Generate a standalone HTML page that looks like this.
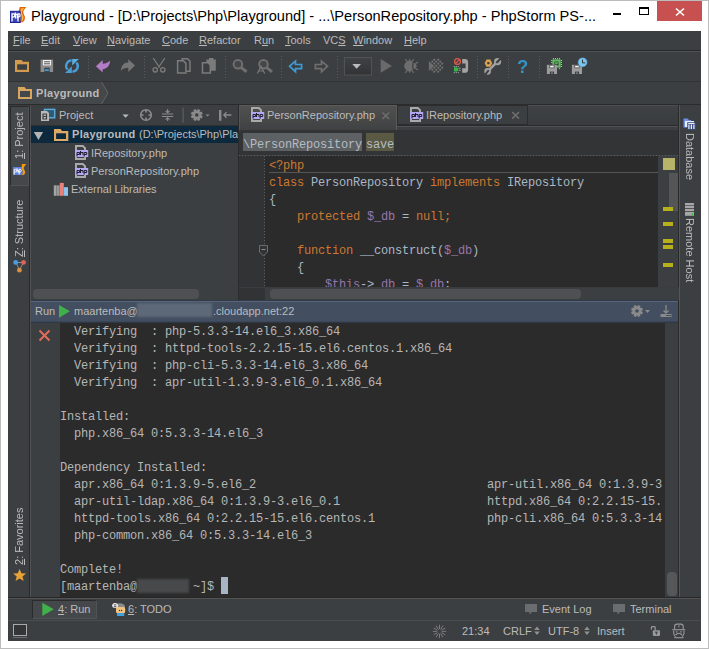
<!DOCTYPE html>
<html><head><meta charset="utf-8">
<style>
*{box-sizing:border-box;margin:0;padding:0}
html,body{width:709px;height:649px;overflow:hidden;background:#fff;font-family:"Liberation Sans",sans-serif}
.a{position:absolute}
.t{position:absolute;white-space:pre;line-height:1}
.m{position:absolute;white-space:pre;line-height:1;font-size:11px;color:#bbbbbb;top:35px}
.m u{text-decoration:underline;text-underline-offset:1px}
.ui{position:absolute;white-space:pre;line-height:1;font-size:11px;color:#bbbbbb}
.mono{font-family:"Liberation Mono",monospace;font-size:12px;letter-spacing:-0.2px;white-space:pre;line-height:17px;position:absolute}
.sep{position:absolute;top:56px;width:1px;height:22px;background:repeating-linear-gradient(#5a5d5f 0 1px,transparent 1px 3px)}
</style></head><body>
<!-- window frame -->
<div class="a" style="left:0;top:0;width:709px;height:649px;border:1px solid #bcbcbc"></div>

<!-- title bar -->
<div class="t" style="left:31px;top:9px;font-size:14.6px;color:#000">Playground - [D:\Projects\Php\Playground] - ...\PersonRepository.php - PhpStorm PS-...</div>
<div class="a" style="left:613px;top:13px;width:8px;height:2px;background:#000"></div>
<div class="a" style="left:639px;top:7px;width:10px;height:8px;border:1px solid #000;border-top-width:2px"></div>
<div class="a" style="left:657px;top:1px;width:45px;height:20px;background:#c75050"></div>
<svg class="a" style="left:657px;top:1px" width="45" height="20"><path d="M19 7.5L27 14.5M27 7.5L19 14.5" stroke="#fff" stroke-width="1.6"/></svg>

<!-- IDE background -->
<div class="a" style="left:8px;top:31px;width:693px;height:610px;background:#3c3f41"></div>

<!-- menu bar -->
<div class="m" style="left:13px"><u>F</u>ile</div>
<div class="m" style="left:41px"><u>E</u>dit</div>
<div class="m" style="left:73px"><u>V</u>iew</div>
<div class="m" style="left:107px"><u>N</u>avigate</div>
<div class="m" style="left:162px"><u>C</u>ode</div>
<div class="m" style="left:199px"><u>R</u>efactor</div>
<div class="m" style="left:254px">R<u>u</u>n</div>
<div class="m" style="left:285px"><u>T</u>ools</div>
<div class="m" style="left:323px">VC<u>S</u></div>
<div class="m" style="left:353px"><u>W</u>indow</div>
<div class="m" style="left:404px"><u>H</u>elp</div>
<div class="a" style="left:8px;top:50px;width:693px;height:1px;background:#262829"></div>
<div class="a" style="left:8px;top:51px;width:693px;height:1px;background:#515456"></div>

<!-- toolbar -->
<div class="sep" style="left:88px"></div>
<div class="sep" style="left:144px"></div>
<div class="sep" style="left:225px"></div>
<div class="sep" style="left:281px"></div>
<div class="sep" style="left:337px"></div>
<div class="sep" style="left:477px"></div>
<div class="sep" style="left:508px"></div>
<div class="sep" style="left:539px"></div>
<div class="a" style="left:8px;top:81px;width:693px;height:1px;background:#313335"></div>

<!-- nav bar -->
<svg class="a" style="left:8px;top:82px" width="110" height="22"><path d="M0 0H93.5L100 11L93.5 22H0Z" fill="#45484a"/><path d="M93.5 0L100 11L93.5 22" stroke="#626568" fill="none"/></svg>
<div class="t" style="left:36px;top:88px;font-size:11px;font-weight:bold;color:#bbbbbb;letter-spacing:0.3px">Playground</div>
<div class="a" style="left:8px;top:104px;width:693px;height:1px;background:#2b2b2b"></div>

<!-- left stripe -->
<div class="a" style="left:10px;top:106px;width:19px;height:80px;background:#45484a;border-left:1px solid #2b2b2b;border-top:1px solid #2b2b2b;border-right:1px solid #505355;border-bottom:1px solid #505355"></div>
<div class="ui" style="left:14px;top:159px;transform-origin:0 0;transform:rotate(-90deg);will-change:transform"><u style="text-underline-offset:1px">1</u>: Project</div>
<div class="ui" style="left:14px;top:257px;transform-origin:0 0;transform:rotate(-90deg);will-change:transform"><u style="text-underline-offset:1px">Z</u>: Structure</div>
<div class="ui" style="left:14px;top:565px;transform-origin:0 0;transform:rotate(-90deg);will-change:transform"><u style="text-underline-offset:1px">2</u>: Favorites</div>
<div class="ui" style="left:695px;top:133px;transform-origin:0 0;transform:rotate(90deg);will-change:transform">Database</div>
<div class="ui" style="left:695px;top:218px;transform-origin:0 0;transform:rotate(90deg);will-change:transform">Remote Host</div>
<div class="a" style="left:29px;top:105px;width:1px;height:492px;background:#2a2a2a"></div><div class="a" style="left:30px;top:105px;width:1px;height:492px;background:#535353"></div>

<!-- project panel -->
<div class="a" style="left:31px;top:125px;width:207px;height:1px;background:#2e3032"></div><div class="a" style="left:31px;top:126px;width:207px;height:17px;background:#0d293e"></div>
<div class="ui" style="left:59px;top:110px;font-size:11px">Project</div>
<div class="t" style="left:72px;top:129px;font-size:11px;font-weight:bold;color:#bbbbbb;letter-spacing:0.3px">Playground</div>
<div class="a" style="left:31px;top:126px;width:207px;height:17px;overflow:hidden"><div class="t" style="left:108px;top:3px;font-size:11px;color:#bbbbbb">(D:\Projects\Php\Playground)</div></div>
<div class="ui" style="left:91px;top:148px">IRepository.php</div>
<div class="ui" style="left:91px;top:166px">PersonRepository.php</div>
<div class="ui" style="left:71px;top:184px">External Libraries</div>
<div class="a" style="left:33px;top:289px;width:166px;height:10px;border-radius:4px;background:#4e5052"></div>

<!-- editor -->
<div class="a" style="left:238px;top:105px;width:1px;height:195px;background:#2b2b2b"></div>
<div class="a" style="left:239px;top:105px;width:439px;height:20px;background:linear-gradient(#3f4244,#393c3e);border-top:1px solid #4c4f51"></div>
<div class="a" style="left:239px;top:125px;width:439px;height:1px;background:#2b2b2b"></div>
<div class="a" style="left:239px;top:126px;width:439px;height:1px;background:#4f5254"></div>
<div class="a" style="left:239px;top:127px;width:439px;height:3px;background:#3c3f41"></div>
<div class="a" style="left:397px;top:105px;width:131px;height:20px;background:#3c3f41;border:1px solid #2b2d2f;border-top-color:#2b2d2f"></div>
<div class="a" style="left:239px;top:105px;width:158px;height:25px;background:linear-gradient(#505050,#404142);border-top:1px solid #5c5c5c;border-left:1px solid #555555;border-right:1px solid #5a5a5a"></div>
<div class="a" style="left:239px;top:130px;width:439px;height:25px;background:#323436"></div>
<div class="a" style="left:239px;top:156px;width:26px;height:131px;background:#313335"></div>
<div class="a" style="left:265px;top:156px;width:393px;height:131px;background:#2b2b2b"></div>

<!-- right stripe -->
<div class="a" style="left:678px;top:105px;width:1px;height:492px;background:#2a2a2a"></div><div class="a" style="left:679px;top:105px;width:1px;height:492px;background:#555555"></div>

<!-- run panel -->
<div class="a" style="left:31px;top:300px;width:647px;height:1px;background:#2f3a4a"></div>
<div class="a" style="left:31px;top:301px;width:647px;height:1px;background:#5a6678"></div>
<div class="a" style="left:31px;top:302px;width:647px;height:19px;background:#434f60"></div>
<div class="a" style="left:31px;top:321px;width:647px;height:1px;background:#3b4758"></div>
<div class="a" style="left:31px;top:322px;width:647px;height:1px;background:#2f3845"></div>
<div class="a" style="left:60px;top:323px;width:605px;height:274px;background:#2b2b2b"></div>
<div class="a" style="left:8px;top:597px;width:693px;height:1px;background:#272727"></div><div class="a" style="left:8px;top:598px;width:693px;height:1px;background:#535353"></div>
<div class="a" style="left:8px;top:620px;width:693px;height:1px;background:#4a4d4f"></div>



<!-- EDITOR CONTENT -->
<div class="ui" style="left:267px;top:110px">PersonRepository.php</div>
<div class="ui" style="left:426px;top:110px">IRepository.php</div>
<div class="a" style="left:243px;top:133px;width:119px;height:18px;background:#5e6164"></div>
<div class="a" style="left:366px;top:133px;width:28px;height:18px;background:#5a5943"></div>
<div class="mono" style="left:243px;top:136px;line-height:18px;color:#b4bcc4">\PersonRepository</div><div class="mono" style="left:366px;top:136px;line-height:18px;color:#b4bcc4">save</div>
<div class="a" style="left:239px;top:155px;width:439px;height:1px;background:repeating-linear-gradient(90deg,#5a5c5e 0 1px,transparent 1px 3px)"></div>
<div class="a" style="left:264px;top:156px;width:1px;height:131px;background:repeating-linear-gradient(#5a5c5e 0 1px,transparent 1px 3px)"></div>
<div class="a" style="left:269px;top:172px;width:389px;height:1px;background:#555555"></div>
<div class="mono" style="left:269px;top:158px;color:#a9b7c6"><span style="color:#cc7832">&lt;?php</span>
<span style="color:#cc7832">class</span> PersonRepository <span style="color:#cc7832">implements</span> IRepository
{
    <span style="color:#cc7832">protected</span> <span style="color:#9876aa">$_db</span> = <span style="color:#cc7832">null;</span>

    <span style="color:#cc7832">function</span> __construct(<span style="color:#9876aa">$_db</span>)
    {
        <span style="color:#9876aa">$this</span>-&gt;<span style="color:#9876aa">_db</span> = <span style="color:#9876aa">$_db</span>;</div>
<!-- bottom of editor -->
<div class="a" style="left:239px;top:287px;width:440px;height:13px;background:#3c3f41"></div>
<div class="a" style="left:239px;top:287px;width:26px;height:13px;background:#313335"></div>
<div class="a" style="left:239px;top:287px;width:439px;height:1px;background:#3a3d3f"></div>
<div class="a" style="left:270px;top:289px;width:311px;height:10px;border-radius:4px;background:#4e5052"></div>
<!-- error stripe -->
<div class="a" style="left:658px;top:156px;width:20px;height:131px;background:#3c3f41"></div>
<div class="a" style="left:663px;top:158px;width:12px;height:12px;background:#b7b46a"></div>
<div class="a" style="left:669px;top:173px;width:9px;height:38px;background:#535557"></div>
<div class="a" style="left:663px;top:207px;width:10px;height:4px;background:#b8b019"></div>
<div class="a" style="left:663px;top:222px;width:10px;height:4px;background:#b8b019"></div>
<div class="a" style="left:663px;top:239px;width:10px;height:4px;background:#b8b019"></div>
<div class="a" style="left:663px;top:245px;width:10px;height:4px;background:#b8b019"></div>
<div class="a" style="left:663px;top:263px;width:10px;height:4px;background:#b8b019"></div>
<!-- fold marker -->
<svg class="a" style="left:258px;top:245px" width="11" height="12"><path d="M1.5 0.5H9.5V7L5.5 11L1.5 7Z" fill="#313335" stroke="#6b6d6f"/><path d="M3.5 4.5H7.5" stroke="#8a8a8a"/></svg>

<!-- RUN PANEL CONTENT -->
<div class="ui" style="left:35px;top:306px">Run</div>
<svg class="a" style="left:58px;top:304px" width="14" height="15"><path d="M1 1L12 7.3L1 13.7Z" fill="#3fb04a"/></svg>
<div class="ui" style="left:74px;top:306px">maartenba@</div>
<div class="a" style="left:137px;top:303px;width:75px;height:14px;background:#5d6878;filter:blur(0.8px)"></div>
<div class="ui" style="left:213px;top:306px">.cloudapp.net:22</div>
<svg class="a" style="left:38px;top:329px" width="14" height="14"><path d="M1.5 1.5L11.5 11.5M11.5 1.5L1.5 11.5" stroke="#e06c5a" stroke-width="2"/></svg>
<div class="a" style="left:665px;top:323px;width:13px;height:274px;background:#3c3f41"></div>
<div class="a" style="left:667px;top:572px;width:10px;height:24px;border-radius:4px;background:#555759"></div>
<div class="mono" style="left:60px;top:324px;color:#b6b6b6">  Verifying  : php-5.3.3-14.el6_3.x86_64
  Verifying  : httpd-tools-2.2.15-15.el6.centos.1.x86_64
  Verifying  : php-cli-5.3.3-14.el6_3.x86_64
  Verifying  : apr-util-1.3.9-3.el6_0.1.x86_64

Installed:
  php.x86_64 0:5.3.3-14.el6_3

Dependency Installed:
  apr.x86_64 0:1.3.9-5.el6_2                                 apr-util.x86_64 0:1.3.9-3
  apr-util-ldap.x86_64 0:1.3.9-3.el6_0.1                     httpd.x86_64 0:2.2.15-15.
  httpd-tools.x86_64 0:2.2.15-15.el6.centos.1                php-cli.x86_64 0:5.3.3-14
  php-common.x86_64 0:5.3.3-14.el6_3

Complete!
[maartenba@        ~]$ </div>
<div class="a" style="left:137px;top:579px;width:52px;height:14px;background:#47494b;filter:blur(0.8px)"></div>
<div class="a" style="left:221px;top:577px;width:7px;height:17px;background:#a7b4c4"></div>
<!-- run header right icons -->
<svg class="a" style="left:628px;top:303px" width="46" height="16">
<path d="M13.39 8.30 L15.01 9.02 L13.97 11.53 L12.31 10.89 L11.89 11.31 L12.53 12.97 L10.02 14.01 L9.30 12.39 L8.70 12.39 L7.98 14.01 L5.47 12.97 L6.11 11.31 L5.69 10.89 L4.03 11.53 L2.99 9.02 L4.61 8.30 L4.61 7.70 L2.99 6.98 L4.03 4.47 L5.69 5.11 L6.11 4.69 L5.47 3.03 L7.98 1.99 L8.70 3.61 L9.30 3.61 L10.02 1.99 L12.53 3.03 L11.89 4.69 L12.31 5.11 L13.97 4.47 L15.01 6.98 L13.39 7.70ZM10.80 8.00A1.8 1.8 0 1 0 7.20 8.00A1.8 1.8 0 1 0 10.80 8.00Z" fill="#8a8a8a" fill-rule="evenodd"/>
<path d="M17 7H22L19.5 10Z" fill="#8a8a8a"/>
<path d="M38 2V10M35.5 7.5L38 10L40.5 7.5" fill="none" stroke="#8a8a8a" stroke-width="1.3"/>
<rect x="32.5" y="11" width="11" height="3" fill="#8a8a8a"/>
<rect x="38" y="12" width="5" height="1" fill="#434f60"/>
</svg>

<!-- BOTTOM BAR -->
<div class="a" style="left:32px;top:600px;width:65px;height:19px;background:#45484a;border-left:1px solid #2b2b2b;border-top:1px solid #2b2b2b;border-right:1px solid #505355;border-bottom:1px solid #505355"></div>
<svg class="a" style="left:41px;top:602px" width="14" height="15"><path d="M1.3 0.7L12.8 7.3L1.3 14Z" fill="#3fb04a"/></svg>
<div class="ui" style="left:58px;top:604px"><span style="text-decoration:underline">4</span>: Run</div>
<div class="ui" style="left:128px;top:604px"><span style="text-decoration:underline">6</span>: TODO</div>
<svg class="a" style="left:108px;top:598px" width="20" height="20">
<path d="M8 7.5C8 4.5 16.5 4.5 17 8.5V12H8Z" fill="#8c8c8c"/>
<rect x="8" y="9" width="9.2" height="6.4" rx="2" fill="#f0c47e"/>
<circle cx="11.5" cy="12.5" r="0.7" fill="#333"/><circle cx="13.6" cy="12.5" r="0.7" fill="#333"/>
<rect x="9" y="15" width="7.2" height="3" fill="#3fa2e0"/>
<ellipse cx="7.1" cy="7.6" rx="2.9" ry="2.5" fill="#f4f4f4"/>
<path d="M5.8 6.9H8.4M5.8 8.7H8.4" stroke="#333" stroke-width="0.9"/>
</svg>
<svg class="a" style="left:524px;top:603px" width="150" height="13">
<path d="M1 1H13V9H8L5.5 11.5V9H1Z" fill="#6a6d70"/>
<path d="M89 1H101V9H96L93.5 11.5V9H89Z" fill="#6a6d70"/>
</svg>
<div class="ui" style="left:542px;top:604px">Event Log</div>
<div class="ui" style="left:630px;top:604px">Terminal</div>

<!-- STATUS BAR -->
<div class="a" style="left:13px;top:624px;width:14px;height:12px;border:1.3px solid #a9a9a9;background:#333537"></div>
<div class="a" style="left:13px;top:637px;width:14px;height:1px;background:#6a6a6a"></div>
<svg class="a" style="left:0;top:0;overflow:visible" width="1" height="1"><path d="M442.20 631.40L445.80 631.40M441.84 632.75L444.96 634.55M440.85 633.74L442.65 636.86M439.50 634.10L439.50 637.70M438.15 633.74L436.35 636.86M437.16 632.75L434.04 634.55M436.80 631.40L433.20 631.40M437.16 630.05L434.04 628.25M438.15 629.06L436.35 625.94M439.50 628.70L439.50 625.10M440.85 629.06L442.65 625.94M441.84 630.05L444.96 628.25" stroke="#7c7c7c" stroke-width="1" stroke-linecap="round"/></svg>
<div class="ui" style="left:462px;top:626px">21:34</div>
<div class="ui" style="left:503px;top:626px">CRLF</div>
<div class="ui" style="left:548px;top:626px">UTF-8</div>
<div class="ui" style="left:597px;top:626px">Insert</div>
<svg class="a" style="left:530px;top:625px" width="60" height="12">
<path d="M4.2 5L7 1.6L9.8 5ZM4.2 6.6L7 10L9.8 6.6Z" fill="#909090"/>
<path d="M54.2 5L57 1.6L59.8 5ZM54.2 6.6L57 10L59.8 6.6Z" fill="#909090"/>
</svg>
<svg class="a" style="left:0;top:0;overflow:visible" width="1" height="1">
<path d="M651.4 629.6V627.6Q651.4 626.7 652.3 626.7H654.3Q655.2 626.7 655.2 627.6V630.6" fill="none" stroke="#999" stroke-width="1.2"/>
<rect x="652.8" y="630.3" width="7.2" height="5.6" rx="1" fill="#999"/>
<path d="M655 632.2H657.8M656.4 632.2V634.6" stroke="#3c3f41" stroke-width="1"/>
<g fill="none" stroke="#999" stroke-width="1.1">
<path d="M674.6 629.4V626.4Q674.6 624.1 677 624.1H680.8Q683.2 624.1 683.2 626.4V629.4"/>
<path d="M672.3 629.7H685.3"/>
<path d="M673.7 630.6Q673.4 635 675.6 636.6M684 630.6Q684.3 635 682.1 636.6"/>
<path d="M675.6 635Q678.8 631.6 682.1 635"/>
<path d="M674.3 637.7H683.5"/>
<path d="M675.9 631.9H677.4M680.2 631.9H681.7"/>
<path d="M678.9 625.4V627.2"/>
</g>
</svg>

<!-- ICON OVERLAY -->
<svg class="a" style="left:0;top:0" width="709" height="649">

<!-- title icon -->
<path d="M19.8 7H26.2L23.8 10.2Q22.3 12.2 23.8 14.2Q25.8 17 24.6 20Q23.6 22.6 19 22.9Q20.8 20.3 20.8 18.2Q20.8 15.8 19.4 13.6Q18.2 10.8 19.8 7Z" fill="#e0600a"/>
<path d="M21 8.3H24.3L22.6 10.4Q21.2 12.2 22.6 14.5Q24.2 17 23.3 19.6Q22.6 21.3 21 21.8Q22 20 22 18Q22 15.5 20.7 13.5Q19.9 11 21 8.3Z" fill="#ffb43a"/>
<rect x="10.5" y="11.3" width="9.6" height="11.2" fill="#3a46b8" stroke="#1c2596" stroke-width="1"/>
<path d="M12 21.5V13.8H13.8Q14.8 13.8 14.8 15.3Q14.8 16.8 13.8 16.8H12.6M15.4 12.4V18.6M15.4 14.3H16.8Q17.3 14.3 17.3 15V18.6M18 21.5V13.8H19.3Q20 13.8 20 15.3Q20 16.8 19.3 16.8H18.6" fill="none" stroke="#fff" stroke-width="1.3"/>
<!-- toolbar: open -->
<path d="M15 60H21.5L23 61.8H29V72H15Z" fill="#d19a4c"/>
<rect x="17.2" y="64.3" width="9.8" height="5.5" fill="#3c3f41"/>
<!-- save -->
<path d="M40.6 59.6H53.1V72H40.6Z" fill="#8c8c8c"/>
<rect x="43" y="60" width="8" height="5.4" fill="#f0f0f0"/>
<rect x="44" y="61.3" width="6" height="1" fill="#555"/>
<rect x="44" y="63.3" width="6" height="1" fill="#555"/>
<rect x="44.3" y="67.7" width="5.3" height="4.3" fill="#3c3f41"/>
<rect x="44.8" y="69.2" width="4" height="1.9" fill="#3d9ad6"/>
<!-- sync -->
<path d="M71.6 60.4A5.5 5.5 0 0 0 67.6 69.6" fill="none" stroke="#4a9ed8" stroke-width="2.3"/>
<path d="M65.1 72.9H71.8V66.2Z" fill="#4a9ed8"/>
<path d="M72.4 71.6A5.5 5.5 0 0 0 76.4 62.4" fill="none" stroke="#4a9ed8" stroke-width="2.3"/>
<path d="M78.8 59.1H72.2V65.6Z" fill="#5aaee2"/>
<!-- undo -->
<path d="M95.9 66.3L102.7 59.9V63.8C106 63.8 108.5 62.5 109.8 60.6C110.5 65 107 69 102.7 69.3V72.6Z" fill="#b27cc6"/>
<!-- redo -->
<path d="M135 65.4L128.3 59.2V62.6C124 62.6 121 66 120.9 70.9C122.5 68.5 125 67.8 128.3 67.8V71.9Z" fill="#757575"/>
<!-- cut -->
<g stroke="#7b7b7b" fill="none" stroke-width="1.3">
<path d="M153.2 58L159.5 67.5M164.8 58L158.5 67.5"/>
<circle cx="155.2" cy="69.8" r="2.2"/><circle cx="162.8" cy="69.8" r="2.2"/>
</g>
<!-- copy -->
<g stroke="#7b7b7b" fill="#3c3f41" stroke-width="1.5">
<path d="M182.2 58.8H187.5L190 61.3V71.2H182.2Z"/>
<path d="M177.6 60.8H183.3L185.9 63.4V73.1H177.6Z"/>
</g>
<!-- paste -->
<path d="M206.4 59.5H215.8V70.8H206.4Z" fill="#7b7b7b"/>
<rect x="209" y="58" width="4.5" height="2" fill="#7b7b7b"/>
<path d="M202.5 62.8H208L210.3 65V73.1H202.5Z" fill="#3c3f41" stroke="#7b7b7b" stroke-width="1.5"/>
<!-- find -->
<g>
<circle cx="237.9" cy="64.2" r="4.3" fill="#444648" stroke="#6f6f6f" stroke-width="2"/>
<path d="M241.2 67.6L246.6 71.8" stroke="#6f6f6f" stroke-width="3"/>
<circle cx="263.5" cy="64.2" r="4.3" fill="#444648" stroke="#6f6f6f" stroke-width="2"/>
<path d="M266.8 67.6L272 71.8" stroke="#6f6f6f" stroke-width="3"/>
<path d="M257.3 73.4L261 66.3L264.7 73.4M258.7 71H263.3" stroke="#7a7a7a" stroke-width="1.1" fill="none"/>
</g>
<!-- back / forward -->
<path d="M289.6 66.2L295.5 61.2V64.5H301.6V68.6H295.5V71.8Z" fill="none" stroke="#3d9bd5" stroke-width="1.7" stroke-linejoin="miter"/>
<path d="M327.4 66.2L321.5 61.2V64.5H315.4V68.6H321.5V71.8Z" fill="none" stroke="#6f6f6f" stroke-width="1.7"/>
<!-- run config dropdown -->
<defs><linearGradient id="dd" x1="0" y1="0" x2="0" y2="1"><stop offset="0" stop-color="#3f4244"/><stop offset="1" stop-color="#313335"/></linearGradient></defs><rect x="344.5" y="57.5" width="27" height="17.5" fill="url(#dd)" stroke="#505355" stroke-width="1"/>
<path d="M352.3 64H361L356.6 68.8Z" fill="#bbbbbb"/>
<!-- play -->
<path d="M380.7 59.1V72.7L392 65.9Z" fill="#6a6a6a"/>
<!-- debug -->
<path d="M412.6 61.6A5.3 5.3 0 1 0 412.6 70.4Q411.7 66 412.6 61.6Z" fill="#6d6d6d"/>
<path d="M413.8 62.6Q417 64.5 416.6 66Q417 67.5 413.8 69.4Q412.9 66 413.8 62.6Z" fill="#6d6d6d"/>
<path d="M415.6 64.2Q416 62.4 418.2 62.4M415.6 67.8Q416 69.6 418.2 69.6" fill="none" stroke="#6d6d6d" stroke-width="1.1"/>
<path d="M405.2 59.1L407.3 61.6M409.6 59.3V61.3M413.8 59.2L411.7 61.6M405.2 72.9L407.3 70.4M409.6 72.7V70.7M413.8 72.8L411.7 70.4" stroke="#6d6d6d" stroke-width="1.2"/>
<!-- coverage -->
<path d="M428.9 61.1V70.9L434.2 66Z" fill="#6d6d6d"/>
<g fill="#767676"><rect x="433.4" y="58.8" width="1.8" height="1.8"/><rect x="437.4" y="58.8" width="1.8" height="1.8"/><rect x="431.4" y="60.7" width="1.8" height="1.8"/><rect x="435.3" y="60.7" width="1.8" height="1.8"/><rect x="439.3" y="60.7" width="1.8" height="1.8"/><rect x="433.4" y="62.7" width="1.8" height="1.8"/><rect x="437.3" y="62.7" width="1.8" height="1.8"/><rect x="441.3" y="62.7" width="1.8" height="1.8"/><rect x="435.3" y="64.8" width="1.8" height="1.8"/><rect x="439.3" y="64.8" width="1.8" height="1.8"/><rect x="433.4" y="66.8" width="1.8" height="1.8"/><rect x="437.3" y="66.8" width="1.8" height="1.8"/><rect x="441.3" y="66.8" width="1.8" height="1.8"/><rect x="431.4" y="68.8" width="1.8" height="1.8"/><rect x="435.3" y="68.8" width="1.8" height="1.8"/><rect x="439.3" y="68.8" width="1.8" height="1.8"/><rect x="433.4" y="70.8" width="1.8" height="1.8"/><rect x="437.3" y="70.8" width="1.8" height="1.8"/></g>
<!-- disconnect -->
<circle cx="457.5" cy="61.5" r="2.9" fill="none" stroke="#e05a47" stroke-width="1.3"/>
<path d="M459.6 59.4L455.4 63.6" stroke="#e05a47" stroke-width="1.3"/>
<path d="M454 67.2H457L458.2 68.4V70.4L457 71.6H454Z" fill="#35b548"/>
<g fill="#c8c8c8"><rect x="453.8" y="66" width="0.9" height="0.9"/><rect x="455.8" y="66" width="0.9" height="0.9"/><rect x="457.8" y="66" width="0.9" height="0.9"/><rect x="453.8" y="72.2" width="0.9" height="0.9"/><rect x="455.8" y="72.2" width="0.9" height="0.9"/><rect x="457.8" y="72.2" width="0.9" height="0.9"/></g>
<path d="M458.5 68.3H460.8M458.5 70.3H460.8" stroke="#9a9a9a" stroke-width="0.9"/>
<path d="M462.2 59.1H465Q468.1 59.1 468.1 62.5V69.4Q468.1 72.8 465 72.8H462.2V68.3H465.6V63.4H462.2Z" fill="#a3a3a3"/>
<!-- wrench -->
<path d="M484.6 63.2L486.5 59.6H490.3L492.2 63.2L490.3 66.8H486.5Z" fill="#d9a150"/>
<rect x="487.2" y="62.1" width="2.4" height="2.1" rx="0.6" fill="#3c3f41"/>
<path d="M488 71L496.6 62.4" stroke="#a0a0a0" stroke-width="2.6"/>
<circle cx="497.6" cy="61.6" r="3.6" fill="#a0a0a0"/>
<circle cx="487.6" cy="71.4" r="3.3" fill="#a0a0a0"/>
<path d="M497 62.2L501.5 57.7" stroke="#3c3f41" stroke-width="2.2" stroke-linecap="round"/>
<path d="M488.2 70.8L485.2 74.6" stroke="#3c3f41" stroke-width="2" stroke-linecap="round"/>
<!-- help -->
<text x="517" y="72.8" font-family="Liberation Sans" font-size="18.5" font-weight="bold" fill="#3592c4">?</text>
<!-- save green -->
<rect x="552.3" y="59.4" width="8.4" height="8.2" fill="#5cbf5c"/>
<rect x="554.4" y="61.5" width="4.2" height="4" fill="#3c3f41"/>
<rect x="555.2" y="62.2" width="2.6" height="1.6" fill="#5cbf5c"/>
<g fill="#d8d8d8"><rect x="553" y="58.2" width="0.9" height="0.9"/><rect x="555" y="58.2" width="0.9" height="0.9"/><rect x="557" y="58.2" width="0.9" height="0.9"/><rect x="559" y="58.2" width="0.9" height="0.9"/><rect x="561" y="60" width="0.9" height="0.9"/><rect x="561" y="62" width="0.9" height="0.9"/><rect x="561" y="64" width="0.9" height="0.9"/><rect x="561" y="66" width="0.9" height="0.9"/><rect x="551.2" y="60" width="0.9" height="0.9"/><rect x="551.2" y="62" width="0.9" height="0.9"/><rect x="559" y="68.2" width="0.9" height="0.9"/></g>
<path d="M546.9 64.8H557.0V74H546.9Z" fill="#9c9c9c"/>
<rect x="549.5" y="64.8" width="4.9" height="3.4" fill="#3c3f41"/>
<rect x="550.1" y="65.6" width="3.7" height="1.9" fill="#f2f2f2"/>
<rect x="549.9" y="71.6" width="4.1" height="2.4" fill="#3c3f41"/>
<rect x="550.9" y="72.6" width="2" height="1" fill="#9c9c9c"/>
<!-- save clock -->
<path d="M571.9 64.8H582.0V74H571.9Z" fill="#9c9c9c"/>
<rect x="574.5" y="64.8" width="4.9" height="3.4" fill="#3c3f41"/>
<rect x="575.1" y="65.6" width="3.7" height="1.9" fill="#f2f2f2"/>
<rect x="574.9" y="71.6" width="4.1" height="2.4" fill="#3c3f41"/>
<rect x="575.9" y="72.6" width="2" height="1" fill="#9c9c9c"/>
<circle cx="582.6" cy="62.3" r="4.6" fill="#7cc6ee" stroke="#3d7fae" stroke-width="0.5"/>
<path d="M582.5 59.5V62.9H585.3" fill="none" stroke="#2a2a2a" stroke-width="0.9"/>
<!-- nav folder -->
<path d="M18 87H24.5L26 89H32V99H18Z" fill="#d8a660"/>
<rect x="20" y="91" width="10" height="6" fill="#45484a"/>

<!-- project header icons -->
<rect x="44.5" y="109.4" width="10.2" height="8.4" fill="#2f5a73" stroke="#5aa9d8" stroke-width="1.5"/>
<path d="M41 111H47L49 113V121H41Z" fill="#b9b9b9"/>
<path d="M43 114H46.5V119H43Z" fill="none" stroke="#3c3f41" stroke-width="1.2"/>
<path d="M43 116.5H46.5" stroke="#3c3f41" stroke-width="1"/>
<path d="M122.5 114.4H128.7L125.6 117.8Z" fill="#bbbbbb"/>
<circle cx="146" cy="115" r="5.3" fill="none" stroke="#8a8a8a" stroke-width="1.6"/>
<path d="M146 109.5V112.5M146 117.5V120.5M140.5 115H143.5M148.5 115H151.5" stroke="#8a8a8a" stroke-width="1.6"/>
<path d="M162 114H173.2M162 116.5H173.2" stroke="#8a8a8a" stroke-width="1"/>
<path d="M167.6 109V112.5M165.6 110.8L167.6 112.8L169.6 110.8M167.6 121V118M165.6 119.7L167.6 117.7L169.6 119.7" fill="none" stroke="#8a8a8a" stroke-width="1.1"/>
<rect x="182.5" y="107.6" width="1.3" height="15.3" fill="#5a5d5f"/>
<path d="M201.19 115.30 L202.81 116.02 L201.77 118.53 L200.11 117.89 L199.69 118.31 L200.33 119.97 L197.82 121.01 L197.10 119.39 L196.50 119.39 L195.78 121.01 L193.27 119.97 L193.91 118.31 L193.49 117.89 L191.83 118.53 L190.79 116.02 L192.41 115.30 L192.41 114.70 L190.79 113.98 L191.83 111.47 L193.49 112.11 L193.91 111.69 L193.27 110.03 L195.78 108.99 L196.50 110.61 L197.10 110.61 L197.82 108.99 L200.33 110.03 L199.69 111.69 L200.11 112.11 L201.77 111.47 L202.81 113.98 L201.19 114.70ZM198.60 115.00A1.8 1.8 0 1 0 195.00 115.00A1.8 1.8 0 1 0 198.60 115.00Z" fill="#8a8a8a" fill-rule="evenodd"/>
<path d="M205.4 114.4H209.7L207.5 116.6Z" fill="#8a8a8a"/>
<rect x="219" y="110" width="2.4" height="10.7" fill="#8a8a8a"/>
<path d="M231.4 115H224M226.5 112.3L223.8 115L226.5 117.7" fill="none" stroke="#8a8a8a" stroke-width="1.3"/>

<!-- tree -->
<path d="M33.8 131.9H43.1L38.5 140.1Z" fill="#b4b4b4"/>
<path d="M54 129H60.5L62 131H68.3V141H54Z" fill="#dcaa62"/>
<rect x="56.1" y="133.3" width="9.9" height="5.7" fill="#0d293e"/>
<g transform="translate(75 145)">
 <path d="M0 0H8.2L11 2.8V15H0ZM2 2V13H9V3.6L7.4 2Z" fill="#a9a9a9" fill-rule="evenodd"/>
 <rect x="2" y="2" width="7" height="11" fill="#3c3f41" opacity="0"/>
 <rect x="0" y="5" width="13.2" height="7" fill="#b4a7f4"/>
 <path d="M2 11.5V7.5H4.5V9.5H2M5.5 6V10M5.5 7.5H8V10M9.2 11.5V7.5H11.7V9.5H9.2" fill="none" stroke="#1e1e2e" stroke-width="1"/>
</g>
<g transform="translate(75 163)">
 <path d="M0 0H8.2L11 2.8V15H0ZM2 2V13H9V3.6L7.4 2Z" fill="#a9a9a9" fill-rule="evenodd"/>
 <rect x="2" y="2" width="7" height="11" fill="#3c3f41" opacity="0"/>
 <rect x="0" y="5" width="13.2" height="7" fill="#b4a7f4"/>
 <path d="M2 11.5V7.5H4.5V9.5H2M5.5 6V10M5.5 7.5H8V10M9.2 11.5V7.5H11.7V9.5H9.2" fill="none" stroke="#1e1e2e" stroke-width="1"/>
</g>
<g>
<rect x="53.8" y="185.3" width="2.8" height="10.5" fill="#a4a4a4"/>
<rect x="56.8" y="185.3" width="2.8" height="10.5" fill="#989898"/>
<rect x="59.8" y="182.9" width="4" height="12.9" fill="#e9837a"/>
<rect x="63.9" y="187.2" width="4.1" height="8.6" fill="#8ac6ee"/>
</g>


<!-- stripe icons -->
<rect x="13" y="167" width="9.6" height="8" fill="#5a7fe0"/>
<path d="M14.2 174.5V169.3H15.5Q16.4 169.3 16.4 170.6Q16.4 171.9 15.5 171.9H14.6M17 168.2V172.6M17 169.9H18Q18.5 169.9 18.5 170.5V172.6M19.2 174.5V169.3H20.4Q21.2 169.3 21.2 170.6Q21.2 171.9 20.4 171.9H19.6" fill="none" stroke="#fff" stroke-width="1"/>
<path d="M22 164H26.2L24.2 166.8Q23.2 168.2 24.3 169.7Q25.8 171.8 25 173.5Q24.4 175 21.8 175.2Q22.8 173.6 22.8 172.3Q22.8 170.8 22 169.5Q21.2 167.5 22 164Z" fill="#f39a12"/>
<g stroke="#8c8f91" stroke-width="1" fill="none"><path d="M16 262.5L19.5 270M23.5 262.5L19.5 270M16 262.5H23.5"/></g>
<circle cx="15.7" cy="262.4" r="2.4" fill="#4a9ee0"/>
<circle cx="23.5" cy="262.4" r="2.4" fill="#e0605a"/>
<circle cx="19.4" cy="270.2" r="2.4" fill="#d98e40"/>
<path d="M19.6 569L21.4 573.3L26 573.5L22.5 576.4L23.7 581L19.6 578.4L15.5 581L16.7 576.4L13.2 573.5L17.8 573.3Z" fill="#e8a23a"/>
<path d="M683.5 118.5H687.5L689 120H691V127.5H683.5Z" fill="#6f8fe8"/>
<rect x="685" y="121" width="9" height="6" fill="#e8eefc"/>
<rect x="687.2" y="122.2" width="8.5" height="7.5" fill="#3b4f86"/>
<rect x="688.3" y="124.5" width="1.2" height="4.5" fill="#f0f0f0"/><rect x="690.8" y="124.5" width="1.2" height="4.5" fill="#f0f0f0"/><rect x="693.3" y="124.5" width="1.2" height="4.5" fill="#f0f0f0"/>
<rect x="688.3" y="123" width="6.2" height="1" fill="#f0f0f0"/>
<g fill="#a6a6a6">
<rect x="685" y="203" width="9" height="2.4"/><rect x="685" y="206" width="9" height="2.2"/><rect x="685" y="209" width="9" height="2.2"/><rect x="685" y="212" width="9" height="3.8"/>
</g>
<circle cx="692.4" cy="214.3" r="1" fill="#22d022"/>
<!-- editor tabs icons -->
<g transform="translate(251 107)">
 <path d="M0 0H8.2L11 2.8V15H0ZM2 2V13H9V3.6L7.4 2Z" fill="#a9a9a9" fill-rule="evenodd"/>
 <rect x="2" y="2" width="7" height="11" fill="#3c3f41" opacity="0"/>
 <rect x="0" y="5" width="13.2" height="7" fill="#b4a7f4"/>
 <path d="M2 11.5V7.5H4.5V9.5H2M5.5 6V10M5.5 7.5H8V10M9.2 11.5V7.5H11.7V9.5H9.2" fill="none" stroke="#1e1e2e" stroke-width="1"/>
</g>
<g transform="translate(410 107)">
 <path d="M0 0H8.2L11 2.8V15H0ZM2 2V13H9V3.6L7.4 2Z" fill="#a9a9a9" fill-rule="evenodd"/>
 <rect x="2" y="2" width="7" height="11" fill="#3c3f41" opacity="0"/>
 <rect x="0" y="5" width="13.2" height="7" fill="#b4a7f4"/>
 <path d="M2 11.5V7.5H4.5V9.5H2M5.5 6V10M5.5 7.5H8V10M9.2 11.5V7.5H11.7V9.5H9.2" fill="none" stroke="#1e1e2e" stroke-width="1"/>
</g>
<path d="M382.5 112.5L389 119M389 112.5L382.5 119" stroke="#6e6e6e" stroke-width="1.5"/>
<path d="M512.2 112L519 118.6M519 112L512.2 118.6" stroke="#6e6e6e" stroke-width="1.5"/>
</svg>
</body></html>
